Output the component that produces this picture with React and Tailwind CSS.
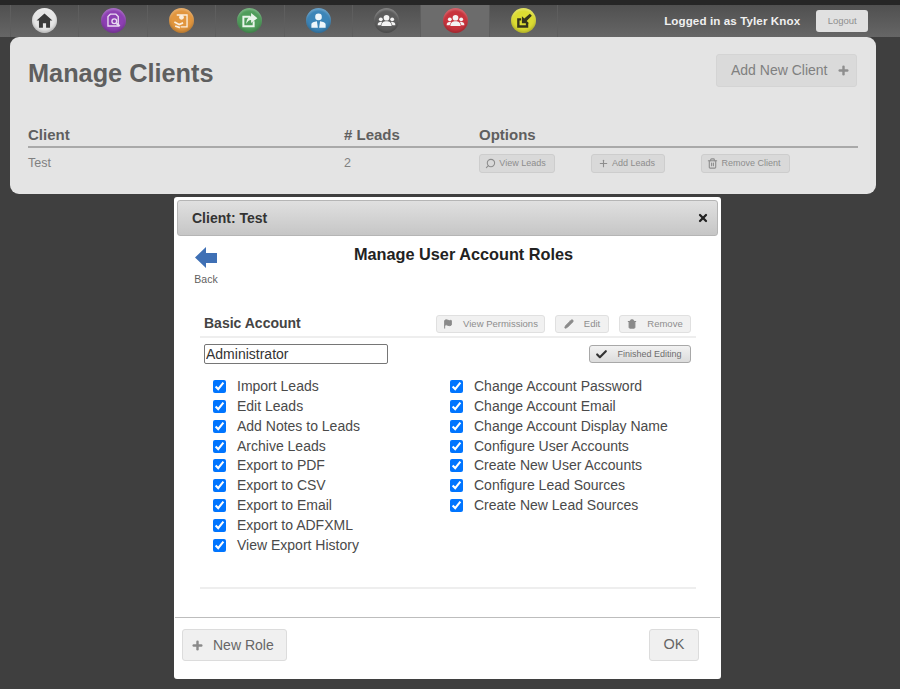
import React from 'react';
import { Plus, X, Search, Trash2, Pencil, Flag, Check } from 'lucide-react';

const navIcons = [
  { bg: 'bg-[#e6e6e6]', glyph: 'home' },
  { bg: 'bg-[#8d3fb3]', glyph: 'search' },
  { bg: 'bg-[#e2963e]', glyph: 'map' },
  { bg: 'bg-[#4f9d5b]', glyph: 'share' },
  { bg: 'bg-[#3c85b8]', glyph: 'user' },
  { bg: 'bg-[#5c5c5c]', glyph: 'group' },
  { bg: 'bg-[#c8333d]', glyph: 'redgroup', active: true },
  { bg: 'bg-[#dcdc32]', glyph: 'import' },
];

const Glyph = ({ name }) => {
  if (name === 'home') {
    return <path d="M12 3 L22 12 H19 V21 H14 V15.5 H10 V21 H5 V12 H2 Z" fill="#3a3a3a" />;
  }
  if (name === 'search') {
    return (
      <g fill="none" stroke="#eadcf2" strokeWidth="1.7">
        <path d="M8 4 H15 L18 7 V19 H5 V7 Z" />
        <circle cx="13" cy="13" r="3" />
        <path d="M15.5 15.5 L20 19" strokeWidth="2.2" />
      </g>
    );
  }
  if (name === 'map') {
    return (
      <g fill="none" stroke="#fbeedd" strokeWidth="1.7">
        <path d="M6 5 H19 V20 H11" />
        <circle cx="12" cy="8" r="2.2" fill="#fbeedd" />
        <path d="M3 14 L9 17 L14 15 M4 19 L10 21" strokeWidth="2.2" />
      </g>
    );
  }
  if (name === 'share') {
    return (
      <g>
        <path d="M3 6 H13 V8.5 H5.5 V18 H16 V13 H18.5 V20.5 H3 Z" fill="#e8f5ea" />
        <path d="M14 2.5 L22 9 L14 15 V11.5 C11 11.5 9.5 13.5 8 16 C8 11 10.5 7 14 6.5 Z" fill="#e8f5ea" />
      </g>
    );
  }
  if (name === 'user') {
    return (
      <g fill="#eef6fb">
        <circle cx="12" cy="7.5" r="4.2" />
        <path d="M3 21 V17 C3 14.5 6.5 13.5 10 13 L11.2 21 Z M21 21 V17 C21 14.5 17.5 13.5 14 13 L12.8 21 Z" />
      </g>
    );
  }
  if (name === 'group' || name === 'redgroup') {
    return (
      <g fill="#f4f4f4">
        <circle cx="12" cy="8.5" r="3.6" />
        <path d="M5.5 19 C5.5 14.5 8.5 13 12 13 C15.5 13 18.5 14.5 18.5 19 Z" />
        <circle cx="4.8" cy="10.5" r="2.4" />
        <path d="M0.8 18 C0.8 14.5 2.5 13.5 6.5 13.5 L4.5 18 Z" />
        <circle cx="19.2" cy="10.5" r="2.4" />
        <path d="M23.2 18 C23.2 14.5 21.5 13.5 17.5 13.5 L19.5 18 Z" />
      </g>
    );
  }
  return (
    <g>
      <path d="M4 9 H9 V12 H7 V18 H15 V15 H18 V21 H4 Z" fill="#34341c" />
      <path d="M20 3.5 L22.5 6 L16 12.5 L19 15.5 H10 V6.5 L13 9.5 Z" fill="#34341c" />
    </g>
  );
};

const TableButton = ({ icon: Icon, label, className, iconClass }) => (
  <button className={`h-[19px] pr-[3px] flex items-center justify-center gap-[3px] rounded-[3px] border border-[#cdcdcd] bg-[#d9d9d9] text-[9px] text-[#8d8d8d] ${className}`}>
    <Icon size={11} strokeWidth={2.4} className={iconClass} />
    {label}
  </button>
);

const RoleButton = ({ icon: Icon, label, className, dark }) => (
  <button
    className={`h-[18px] flex items-center justify-center rounded-[3px] border ${
      dark
        ? 'pr-[3px] gap-[9px] text-[9px] border-[#a8a8a8] bg-gradient-to-b from-[#f2f2f2] to-[#dcdcdc] text-[#6d6d6d]'
        : 'gap-[10px] text-[9.5px] border-[#e0e0e0] bg-[#f1f1f1] text-[#8d8d8d]'
    } ${className}`}
  >
    <Icon
      size={dark ? 13 : 10}
      strokeWidth={dark ? 4 : 2.4}
      fill={dark ? 'none' : 'currentColor'}
      className={dark ? 'text-[#333333]' : 'text-[#8a8a8a]'}
    />
    {label}
  </button>
);

const Permission = ({ label }) => (
  <label className="h-[19.9px] flex items-center text-[14px] text-[#4a4a4a]">
    <input type="checkbox" defaultChecked className="w-[13px] h-[13px] m-0" />
    <span className="ml-[11px]">{label}</span>
  </label>
);

const leftPermissions = ['Import Leads', 'Edit Leads', 'Add Notes to Leads', 'Archive Leads', 'Export to PDF', 'Export to CSV', 'Export to Email', 'Export to ADFXML', 'View Export History'];
const rightPermissions = ['Change Account Password', 'Change Account Email', 'Change Account Display Name', 'Configure User Accounts', 'Create New User Accounts', 'Configure Lead Sources', 'Create New Lead Sources'];

export default function App() {
  return (
    <div className="w-[900px] h-[689px] overflow-hidden bg-[#3f3f3f] font-['Liberation_Sans',Arial,sans-serif]">
      {/* Top bar */}
      <div className="h-[5px] bg-[#262626]" />
      <div className="h-[32px] flex items-stretch pl-[10px] bg-gradient-to-b from-[#505050] to-[#666666]">
        {navIcons.map((item) => (
          <div
            key={item.glyph}
            className={`w-[68.4px] pb-[2px] flex items-center justify-center border-l border-[#5e5e5e] ${item.active ? 'bg-[#6c6c6c]' : ''}`}
          >
            <div className={`w-[25px] h-[25px] rounded-full flex items-center justify-center shadow-[inset_0_-2px_3px_rgba(0,0,0,0.2),inset_0_2px_2px_rgba(255,255,255,0.25)] ${item.bg}`}>
              <svg viewBox="0 0 24 24" width="19" height="19">
                <Glyph name={item.glyph} />
              </svg>
            </div>
          </div>
        ))}
        <div className="w-[0px] border-l border-[#5e5e5e]" />
        <span className="ml-[106px] self-center pb-[1px] text-[11.6px] font-bold text-[#f0f0f0] tracking-[0.1px]">Logged in as Tyler Knox</span>
        <button className="ml-[16px] mt-[5px] w-[52px] h-[22px] rounded-[3px] bg-[#e0e0e0] text-[9.5px] text-[#8f8f8f]">Logout</button>
      </div>

      {/* Manage clients panel */}
      <div className="w-[866px] h-[157px] ml-[10px] pt-[17px] px-[18px] rounded-[9px] bg-[#e4e4e4]">
        <div className="flex justify-between items-start">
          <h1 className="mt-[3px] text-[25.3px] leading-[32px] font-bold text-[#5f5f5f]">Manage Clients</h1>
          <button className="w-[141px] h-[33px] mr-[1px] flex items-center pl-[14px] gap-[9px] rounded-[3px] border border-[#d4d4d4] bg-[#dadada] text-[14px] text-[#808080]">
            Add New Client
            <Plus size={13} strokeWidth={4.5} className="text-[#8e8e8e]" />
          </button>
        </div>
        <div className="mt-[38px] h-[21px] flex items-center border-b-2 border-[#a9a9a9] pb-[3px] text-[15px] font-bold text-[#5f5f5f]">
          <span className="w-[316px]">Client</span>
          <span className="w-[135px]">&#35; Leads</span>
          <span>Options</span>
        </div>
        <div className="mt-[6px] flex items-center text-[12.5px] text-[#808080]">
          <span className="w-[316px]">Test</span>
          <span className="w-[135px]">2</span>
          <TableButton icon={Search} label="View Leads" className="w-[76px]" iconClass="-scale-x-100" />
          <TableButton icon={Plus} label="Add Leads" className="w-[74px] ml-[36px]" />
          <TableButton icon={Trash2} label="Remove Client" className="w-[89px] ml-[36px]" />
        </div>
      </div>

      {/* Dialog */}
      <div className="w-[547px] h-[482px] mt-[3px] ml-[174px] p-[3px] rounded-[3px] bg-white flex flex-col">
        <div className="h-[36px] shrink-0 flex items-center justify-between pl-[14px] pr-[8px] rounded-[3px] border border-[#b5b5b5] bg-gradient-to-b from-[#e0e0e0] to-[#c6c6c6] text-[14px] font-bold text-[#333333]">
          Client: Test
          <X size={12} strokeWidth={4.5} className="text-[#222222]" />
        </div>

        <div className="relative h-[381px] shrink-0">
          <div className="absolute left-[6px] top-[11px] w-[46px] flex flex-col items-center">
            <svg viewBox="0 0 22 21" width="22" height="21">
              <path d="M0 10.5 L11 0 V6 H22 V16 H11 V21 Z" fill="#3f70b5" />
            </svg>
            <span className="mt-[4px] text-[10.5px] text-[#5f5f5f]">Back</span>
          </div>
          <h2 className="pt-[6px] pl-[32px] text-center text-[16.3px] font-bold text-[#222222]">Manage User Account Roles</h2>

          <div className="mt-[47px] ml-[23px] mr-[22px]">
            <div className="h-[25px] flex items-center pl-[4px] pr-[5px] border-b-2 border-[#eeeeee] pb-[2px]">
              <span className="text-[14px] font-bold text-[#444444]">Basic Account</span>
              <div className="ml-auto flex gap-[10px]">
                <RoleButton icon={Flag} label="View Permissions" className="w-[109px]" />
                <RoleButton icon={Pencil} label="Edit" className="w-[54px]" />
                <RoleButton icon={Trash2} label="Remove" className="w-[72px]" />
              </div>
            </div>
            <div className="mt-[6px] flex items-center justify-between pl-[4px] pr-[5px]">
              <input
                readOnly
                value="Administrator"
                className="w-[184px] h-[20px] px-[1px] rounded-[2px] border border-[#767676] text-[14px] text-[#333333] outline-none"
              />
              <RoleButton dark icon={Check} label="Finished Editing" className="w-[102px]" />
            </div>
            <div className="mt-[12px] flex pl-[13px]">
              <div className="w-[237px]">
                {leftPermissions.map((label) => (
                  <Permission key={label} label={label} />
                ))}
              </div>
              <div>
                {rightPermissions.map((label) => (
                  <Permission key={label} label={label} />
                ))}
              </div>
            </div>
            <div className="mt-[32px] h-[2px] bg-[#eeeeee]" />
          </div>
        </div>

        <div className="-mx-[2px] flex-1 border-t border-[#bdbdbd] flex items-start justify-between pt-[11px] pl-[7px] pr-[21px]">
          <button className="w-[105px] h-[32px] flex items-center pl-[8px] gap-[9px] rounded-[3px] border border-[#dcdcdc] bg-[#f0f0f0] text-[14px] text-[#666666]">
            <Plus size={13} strokeWidth={4.5} className="text-[#8a8a8a]" />
            New Role
          </button>
          <button className="w-[50px] h-[32px] rounded-[3px] border border-[#dcdcdc] bg-[#f0f0f0] text-[14.5px] text-[#666666]">OK</button>
        </div>
      </div>
    </div>
  );
}
